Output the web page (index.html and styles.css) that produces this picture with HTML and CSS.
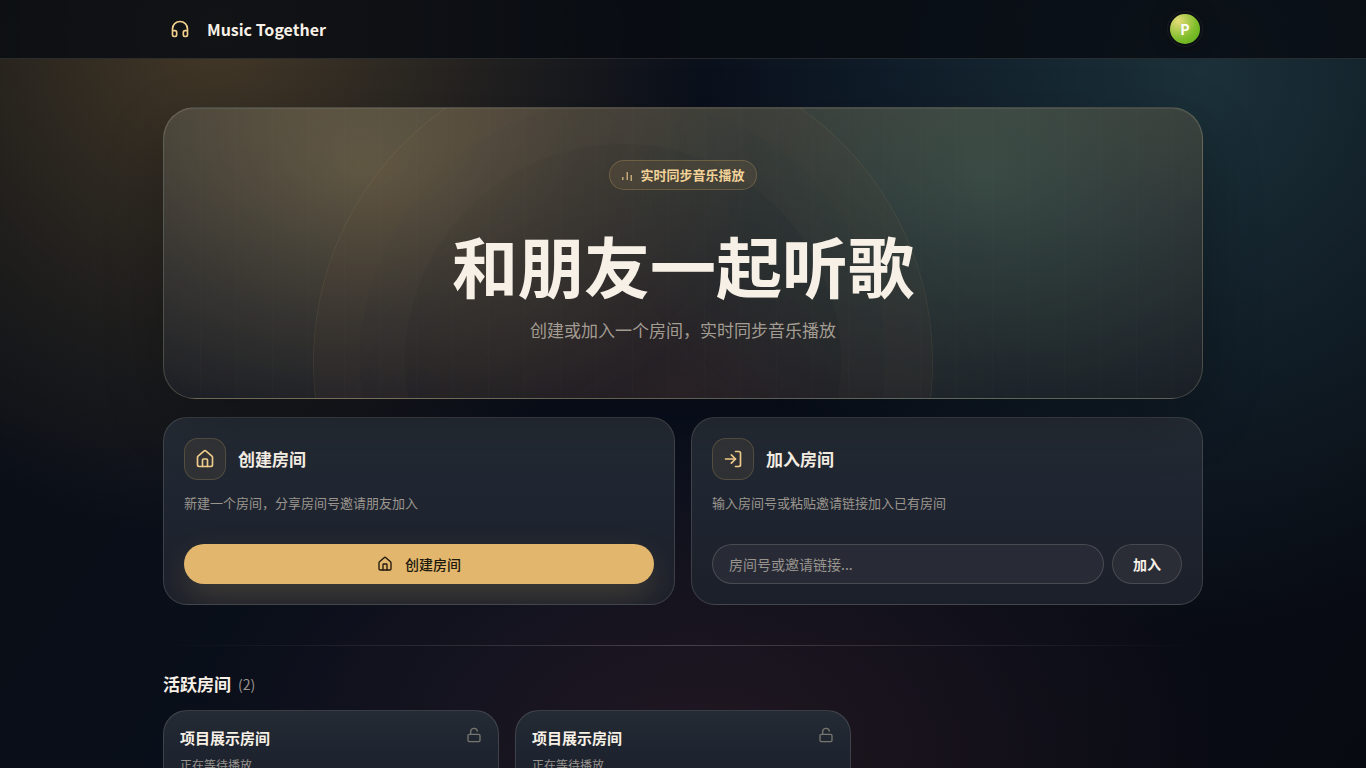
FILE: index.html
```html
<!DOCTYPE html>
<html lang="zh-CN">
<head>
<meta charset="utf-8">
<meta name="viewport" content="width=device-width, initial-scale=1">
<title>Music Together</title>
<link rel="stylesheet" href="styles.css">
</head>
<body>
<svg class="sprite" aria-hidden="true">
  <symbol id="house" viewBox="0 0 24 24"><path d="M15 21v-8a1 1 0 0 0-1-1h-4a1 1 0 0 0-1 1v8"/><path d="M3 10a2 2 0 0 1 .709-1.528l7-5.999a2 2 0 0 1 2.582 0l7 5.999A2 2 0 0 1 21 10v9a2 2 0 0 1-2 2H5a2 2 0 0 1-2-2z"/></symbol>
  <symbol id="unlocked" viewBox="0 0 24 24"><rect width="18" height="11" x="3" y="11" rx="2"/><path d="M7 11V7a5 5 0 0 1 9.900-1"/></symbol>
</svg>
<header class="topbar">
  <div class="container topbar-inner">
    <a class="brand" href="#">
      <svg class="icon brand-icon" viewBox="0 0 24 24" aria-hidden="true"><path d="M3 14h3a2 2 0 0 1 2 2v3a2 2 0 0 1-2 2H5a2 2 0 0 1-2-2v-7a9 9 0 0 1 18 0v7a2 2 0 0 1-2 2h-1a2 2 0 0 1-2-2v-3a2 2 0 0 1 2-2h3"/></svg>
      <span>Music Together</span>
    </a>
    <button class="avatar" type="button" aria-label="P">P</button>
  </div>
</header>
<main class="container page">
  <section class="hero">
    <div class="rings"></div>
    <p class="badge"><svg class="bars" viewBox="0 0 12 12" aria-hidden="true"><path d="M1 8h1.500v3H1zM5.500 3h1.500v8h-1.500zM9.500 6h1.500v6h-1.500z"/></svg><span>实时同步音乐播放</span></p>
    <h1>和朋友一起听歌</h1>
    <p class="lead">创建或加入一个房间，实时同步音乐播放</p>
  </section>
  <section class="actions">
    <article class="card action">
      <div class="card-head"><span class="tile"><svg class="icon" aria-hidden="true"><use href="#house"/></svg></span><h2>创建房间</h2></div>
      <p class="desc">新建一个房间，分享房间号邀请朋友加入</p>
      <button class="primary" type="button"><svg class="icon icon-small" aria-hidden="true"><use href="#house"/></svg><span>创建房间</span></button>
    </article>
    <article class="card action">
      <div class="card-head"><span class="tile"><svg class="icon" viewBox="0 0 24 24" aria-hidden="true"><path d="m10 17 5-5-5-5"/><path d="M15 12H3"/><path d="M15 3h4a2 2 0 0 1 2 2v14a2 2 0 0 1-2 2h-4"/></svg></span><h2>加入房间</h2></div>
      <p class="desc">输入房间号或粘贴邀请链接加入已有房间</p>
      <form class="join"><input type="text" aria-label="房间号或邀请链接" placeholder="房间号或邀请链接..."><button class="secondary" type="button">加入</button></form>
    </article>
  </section>
  <hr class="divider">
  <section class="active">
    <div class="section-head"><h2>活跃房间</h2><span>(2)</span></div>
    <div class="rooms">
      <article class="card room"><div class="room-head"><h3>项目展示房间</h3><svg class="icon lock" aria-hidden="true"><use href="#unlocked"/></svg></div><p>正在等待播放</p></article>
      <article class="card room"><div class="room-head"><h3>项目展示房间</h3><svg class="icon lock" aria-hidden="true"><use href="#unlocked"/></svg></div><p>正在等待播放</p></article>
    </div>
  </section>
</main>
</body>
</html>
```
FILE: styles.css
```css
* { box-sizing: border-box; }

html { scrollbar-width: none; }

body {
  margin: 0;
  min-height: 100vh;
  color: #f7f0e6;
  font-family: "Noto Sans CJK SC", sans-serif;
  font-size: 14px;
  line-height: 20px;
  background:
    radial-gradient(ellipse 36% 66% at 16% 4%, rgba(216, 165, 84, .28), rgba(216, 165, 84, .1) 60%, transparent),
    radial-gradient(ellipse 38% 72% at 88% 10%, rgba(80, 150, 150, .26), rgba(70, 140, 150, .12) 55%, transparent),
    radial-gradient(ellipse 38% 44% at 52% 98%, rgba(130, 62, 66, .2), transparent),
    linear-gradient(125deg, #0a0e14, #090f1c 50%, #080a11);
  background-attachment: fixed;
}

h1, h2, h3, p { margin: 0; }
button, input { font: inherit; color: inherit; }
.sprite { display: none; }

.icon {
  width: 20px;
  height: 20px;
  flex: none;
  fill: none;
  stroke: currentColor;
  stroke-width: 2;
  stroke-linecap: round;
  stroke-linejoin: round;
}
.icon-small { width: 16px; height: 16px; }

.container {
  width: 100%;
  max-width: 1072px;
  margin: 0 auto;
  padding: 0 16px;
}

.topbar {
  background: rgba(8, 12, 18, .84);
  border-bottom: 1px solid rgba(255, 245, 225, .12);
}
.topbar-inner {
  display: flex;
  align-items: center;
  justify-content: space-between;
  height: 58px;
}
.brand {
  display: flex;
  align-items: center;
  gap: 17px;
  padding-left: 7px;
  color: inherit;
  font-size: 16px;
  font-weight: 700;
  text-decoration: none;
}
.brand-icon { color: #f2cf8d; }
.avatar {
  width: 30px;
  height: 30px;
  margin-right: 3px;
  padding: 0;
  border: 0;
  border-radius: 50%;
  color: #fff;
  font-weight: 700;
  background: radial-gradient(circle at 28% 24%, #e6dc78, #7fbd2b 58%, #55aa16);
  box-shadow: 0 0 0 2px #0b0e13, 0 0 0 3px #171b20, 0 0 20px rgba(0, 0, 0, .4);
}

.page { padding-top: 48px; padding-bottom: 48px; }

.hero {
  position: relative;
  display: flex;
  flex-direction: column;
  align-items: center;
  padding: 52px 24px 56px;
  overflow: hidden;
  border: 1px solid rgba(220, 210, 175, .22);
  border-radius: 32px;
  box-shadow: 0 20px 60px rgba(0, 0, 0, .24), inset 0 1px rgba(255, 245, 220, .08);
  background:
    repeating-linear-gradient(90deg, rgba(255, 255, 255, .012) 0 1px, transparent 1px 36px),
    radial-gradient(ellipse 38% 100% at 19% 20%, rgba(204, 174, 110, .3), rgba(204, 174, 110, .12) 55%, transparent),
    radial-gradient(ellipse 38% 104% at 79% 24%, rgba(90, 150, 125, .26), rgba(90, 150, 125, .11) 55%, transparent),
    radial-gradient(ellipse 32% 76% at 50% 100%, rgba(58, 44, 42, .5), transparent),
    linear-gradient(180deg, rgba(58, 57, 54, .92), rgba(38, 40, 44, .92) 50%, rgba(25, 28, 36, .92));
}
.hero > * { position: relative; }
.hero > .rings {
  position: absolute;
  top: -56px;
  left: calc(50% - 370px);
  width: 620px;
  height: 620px;
  border: 1px solid rgba(235, 200, 130, .1);
  border-radius: 50%;
  background: rgba(20, 12, 12, .04);
  box-shadow: inset 0 0 0 46px rgba(235, 190, 110, .014), inset 0 0 0 91px rgba(235, 190, 110, .022);
}
.badge {
  display: flex;
  align-items: center;
  gap: 7px;
  height: 30px;
  padding: 0 11px;
  border: 1px solid rgba(230, 185, 110, .24);
  border-radius: 15px;
  background: rgba(230, 180, 100, .09);
  color: #f2d298;
  font-size: 13px;
  font-weight: 700;
}
.bars { width: 12px; height: 12px; fill: #c2a675; }
h1 {
  margin-top: 36px;
  font-size: 66px;
  line-height: 76px;
  font-weight: 700;
}
.lead {
  margin-top: 16px;
  color: #a39c92;
  font-size: 17px;
  line-height: 24px;
}

.card {
  border: 1px solid rgba(255, 245, 225, .14);
  background: linear-gradient(180deg, #252b34, #1f2530 45%, #1b1f2a);
}
.actions {
  display: grid;
  grid-template-columns: 1fr 1fr;
  gap: 16px;
  margin-top: 18px;
}
.action {
  padding: 20px;
  overflow: hidden;
  border-radius: 24px;
}
.card-head {
  display: flex;
  align-items: center;
  gap: 12px;
}
h2 {
  font-size: 17px;
  line-height: 24px;
  font-weight: 700;
}
.tile {
  display: grid;
  place-items: center;
  width: 42px;
  height: 42px;
  border: 1px solid rgba(230, 190, 120, .2);
  border-radius: 14px;
  background: rgba(230, 180, 90, .08);
  color: #f2cf8d;
}
.desc {
  margin: 13px 0 31px;
  color: #9b958e;
  font-size: 13px;
}
.primary {
  display: flex;
  align-items: center;
  justify-content: center;
  gap: 12px;
  width: 100%;
  height: 40px;
  border: 0;
  border-radius: 20px;
  background: #e2b66c;
  box-shadow: 0 14px 32px rgba(226, 182, 108, .18);
  color: #20190d;
  font-weight: 500;
}
.join { display: flex; gap: 8px; }
.join input {
  flex: 1;
  min-width: 0;
  height: 40px;
  padding: 0 16px;
  border: 1px solid rgba(255, 245, 225, .16);
  border-radius: 20px;
  background: #282b36;
}
.join input::placeholder { color: #99948e; opacity: 1; }
.secondary {
  height: 40px;
  padding: 0 20px;
  border: 1px solid rgba(255, 245, 225, .14);
  border-radius: 20px;
  background: #2a2d36;
  font-weight: 700;
}

.divider {
  height: 1px;
  margin: 40px 0 26px;
  border: 0;
  background: linear-gradient(90deg, transparent, rgba(255, 235, 220, .2) 50%, transparent);
}
.section-head {
  display: flex;
  align-items: center;
  gap: 7px;
}
.section-head span { color: #99938d; }
.rooms {
  display: grid;
  grid-template-columns: repeat(3, 1fr);
  gap: 16px;
  margin-top: 14px;
}
.room {
  padding: 16px;
  border-radius: 24px;
}
.room-head {
  display: flex;
  justify-content: space-between;
}
h3 {
  font-size: 15px;
  line-height: 22px;
  font-weight: 700;
}
.lock {
  width: 16px;
  height: 16px;
  color: #77756f;
}
.room p {
  margin-top: 6px;
  color: #99938d;
  font-size: 12px;
}
```
